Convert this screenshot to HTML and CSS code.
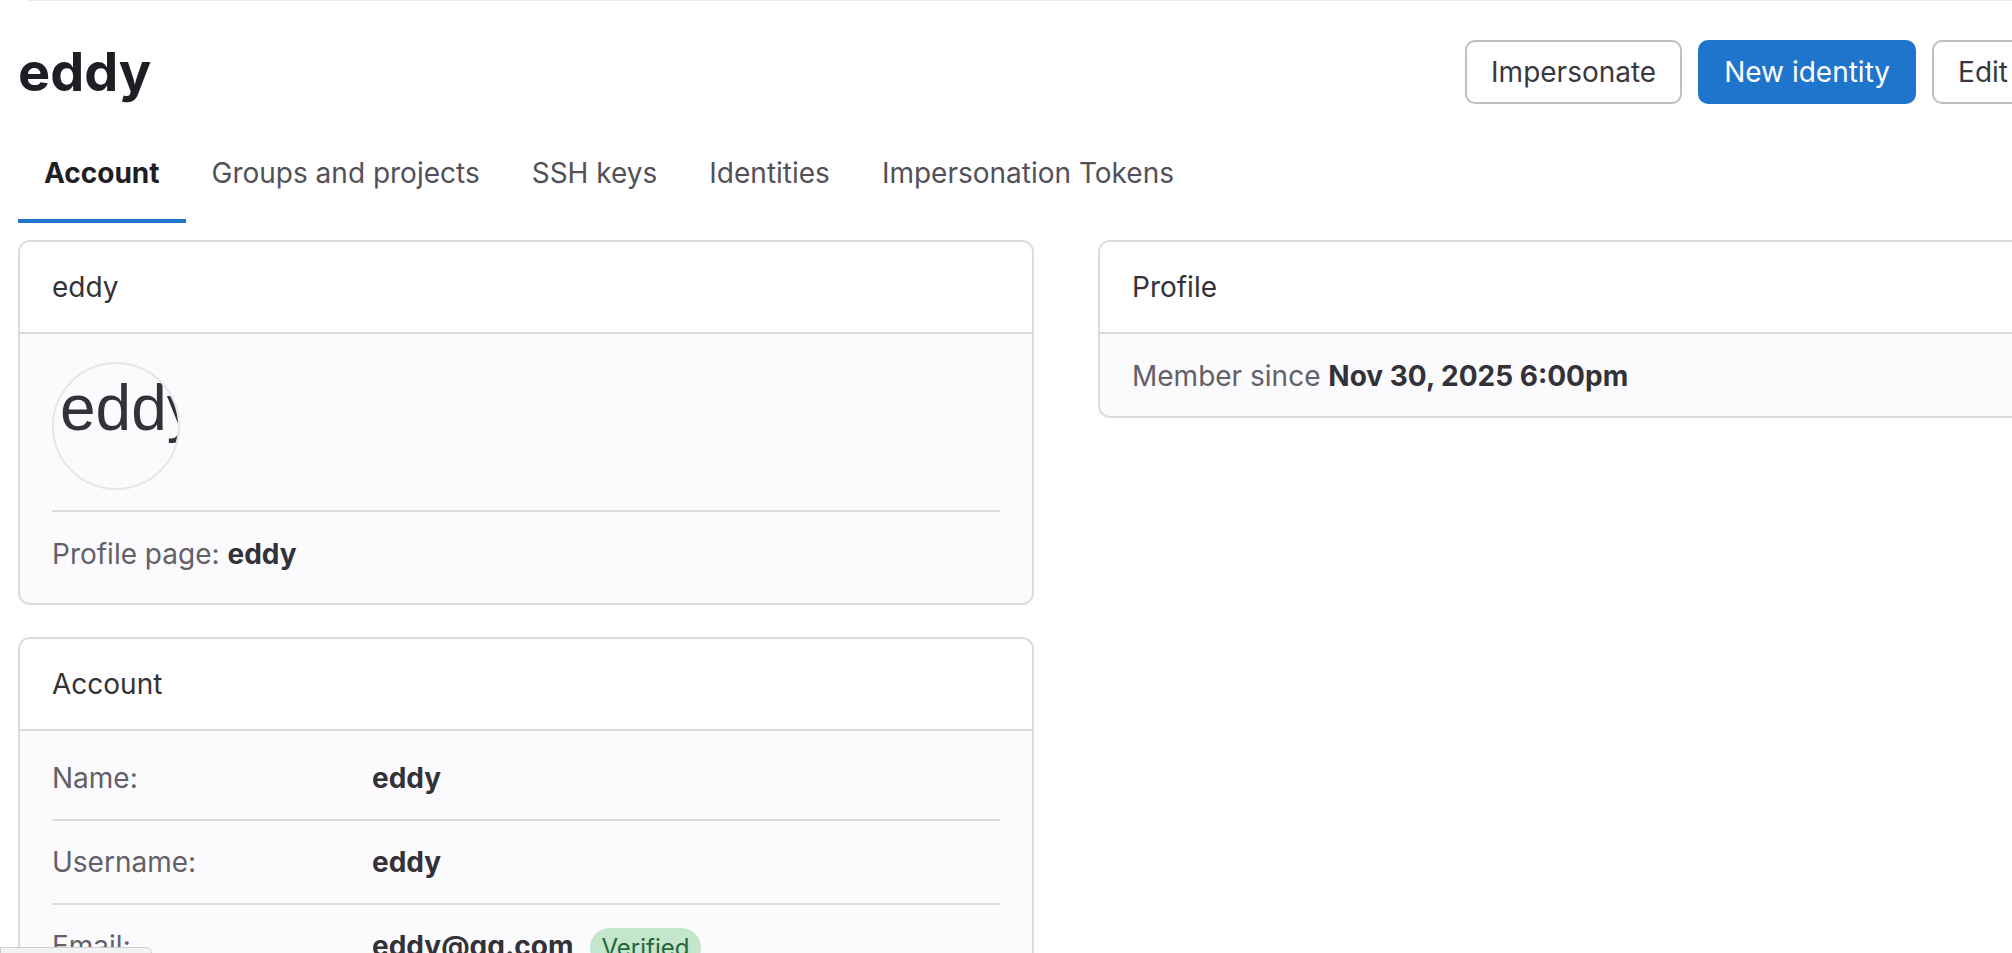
FILE: index.html
```html
<!DOCTYPE html>
<html lang="en">
<head>
    <meta charset="UTF-8">
    <meta name="viewport" content="width=device-width, initial-scale=1.0">
    <title>eddy · Users · Admin area</title>
    <link rel="stylesheet" href="styles.css">
</head>
<body>
    <div class="topline"></div>
    <div class="page">
        <div class="page-head">
            <h1 class="page-title">eddy</h1>
            <div class="head-actions">
                <button class="btn">Impersonate</button>
                <button class="btn btn-confirm">New identity</button>
                <button class="btn">Edit</button>
                <button class="btn btn-icon" aria-label="User actions">
                    <svg width="32" height="32" viewBox="0 0 16 16" fill="#3a383f"><circle cx="8" cy="3" r="1.5"/><circle cx="8" cy="8" r="1.5"/><circle cx="8" cy="13" r="1.5"/></svg>
                </button>
            </div>
        </div>

        <nav class="tabs">
            <a class="tab active" href="#">Account</a>
            <a class="tab" href="#">Groups and projects</a>
            <a class="tab" href="#">SSH keys</a>
            <a class="tab" href="#">Identities</a>
            <a class="tab" href="#">Impersonation Tokens</a>
        </nav>

        <div class="columns">
            <div class="col">
                <div class="card">
                    <div class="card-header">eddy</div>
                    <div class="card-body">
                        <div class="avatar-wrap">
                            <div class="avatar"><span>eddy</span></div>
                        </div>
                        <div class="profile-link">
                            <span class="muted">Profile page:</span> <strong>eddy</strong>
                        </div>
                    </div>
                </div>

                <div class="card">
                    <div class="card-header">Account</div>
                    <div class="card-body list-body">
                        <div class="info-row">
                            <span class="muted">Name:</span>
                            <strong>eddy</strong>
                        </div>
                        <div class="info-row">
                            <span class="muted">Username:</span>
                            <strong>eddy</strong>
                        </div>
                        <div class="info-row">
                            <span class="muted">Email:</span>
                            <span><strong class="email">eddy@gg.com</strong><span class="badge">Verified</span></span>
                        </div>
                        <div class="info-row">
                            <span class="muted">ID:</span>
                            <strong>2</strong>
                        </div>
                    </div>
                </div>
            </div>

            <div class="col">
                <div class="card">
                    <div class="card-header">Profile</div>
                    <div class="card-body profile-body">
                        <span class="muted">Member since</span> <strong>Nov 30, 2025 6:00pm</strong>
                    </div>
                </div>
            </div>
        </div>
    </div>
    <div class="status-bubble"></div>
</body>
</html>
```

FILE: styles.css
```css
* {
    box-sizing: border-box;
}
html, body {
    margin: 0;
    padding: 0;
    overflow: hidden;
}
body {
    background: #fff;
    font-family: Inter, "Noto Sans", sans-serif;
    font-size: 28px;
    line-height: 40px;
    color: #333238;
}
.topline {
    height: 1px;
    margin-left: 28px;
    background: #e4ecf7;
}
.page {
    width: 2096px;
    margin-left: 18px;
}
.page-head {
    display: flex;
    justify-content: space-between;
    align-items: center;
    padding-top: 39px;
    margin-bottom: 25px;
}
.page-title {
    margin: 0;
    font-size: 54px;
    line-height: 64px;
    font-weight: 700;
    color: #1f1e24;
}
.head-actions {
    display: flex;
    gap: 16px;
}
.btn {
    height: 64px;
    padding: 0 24px;
    border: 2px solid #bfbfc3;
    border-radius: 10px;
    background: #fff;
    font-family: inherit;
    font-size: 28px;
    color: #3a383f;
}
.btn-confirm {
    background: #1f75cb;
    border-color: #1f75cb;
    color: #fff;
}
.btn-icon {
    width: 64px;
    padding: 0;
    display: flex;
    align-items: center;
    justify-content: center;
}

.tabs {
    display: flex;
    margin-bottom: 17px;
}
.tab {
    padding: 24px 26px 26px;
    border-bottom: 4px solid transparent;
    color: #535158;
    text-decoration: none;
}
.tab.active {
    font-weight: 700;
    color: #1f1e24;
    border-bottom-color: #1f75cb;
}

.columns {
    display: grid;
    grid-template-columns: 1fr 1fr;
    column-gap: 64px;
    align-items: start;
}
.card {
    border: 2px solid #dcdcde;
    border-radius: 12px;
    background: #fbfafd;
    overflow: hidden;
}
.card + .card {
    margin-top: 32px;
}
.card-header {
    padding: 25px 32px;
    background: #fff;
    border-bottom: 2px solid #dcdcde;
}
.card-body {
    padding: 22px 32px;
}
.list-body {
    padding: 6px 32px;
}
.profile-body {
    padding: 22px 32px 20px;
}
.muted {
    color: #626168;
}
strong {
    font-weight: 700;
    color: #333238;
}

.avatar-wrap {
    padding-top: 6px;
}
.avatar {
    width: 128px;
    height: 128px;
    border: 2px solid #e6e6e8;
    border-radius: 50%;
    overflow: hidden;
    white-space: nowrap;
    font-family: "Liberation Sans", Arial, sans-serif;
    font-size: 64px;
    line-height: 64px;
    color: #333238;
}
.avatar span {
    display: block;
    padding: 12px 0 0 6px;
}
.profile-link {
    margin-top: 20px;
    padding: 22px 0 7px;
    border-top: 2px solid #dcdcde;
}

.info-row {
    display: grid;
    grid-template-columns: 320px 1fr;
    padding: 21px 0;
    border-bottom: 2px solid #dcdcde;
}
.email {
    margin-right: 16px;
}
.badge {
    display: inline-block;
    padding: 0 12px;
    border-radius: 999px;
    background: #c3e6cd;
    color: #24663b;
    font-size: 24px;
    line-height: 40px;
    vertical-align: middle;
}

.status-bubble {
    position: fixed;
    left: 0;
    top: 947px;
    width: 152px;
    height: 20px;
    background: #f1f3f4;
    border: 1px solid #cfcfd2;
    border-top-right-radius: 6px;
}
```
